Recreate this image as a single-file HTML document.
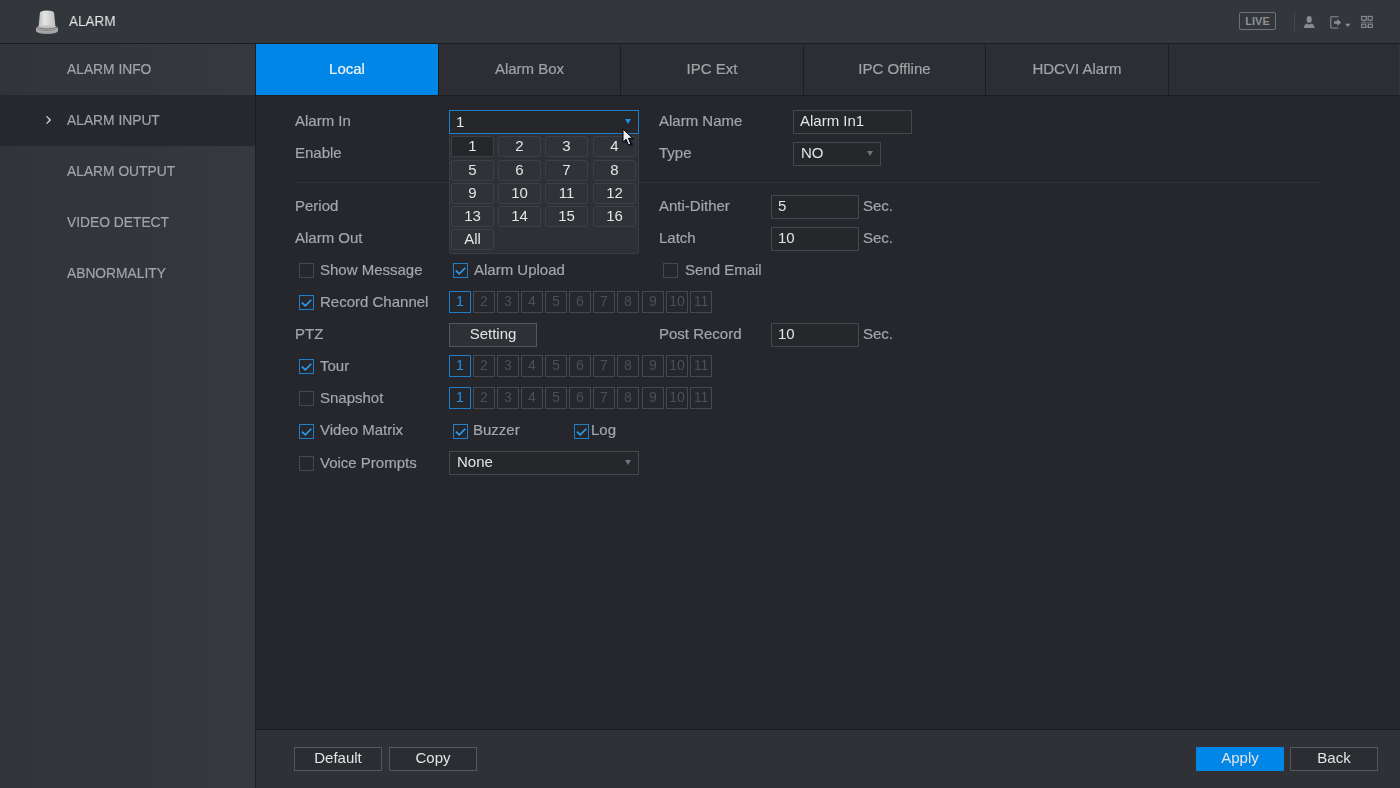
<!DOCTYPE html>
<html><head><meta charset="utf-8">
<style>
*{margin:0;padding:0;box-sizing:border-box}
html,body{width:1400px;height:788px;overflow:hidden;background:#25272c;font-family:"Liberation Sans",sans-serif;}
.a{position:absolute}
.lbl,.val,.si,.tab,.btn,.cell,.ch,.hd{will-change:transform}
.lbl,.si,.tab{-webkit-text-stroke:0.2px currentColor}
#hdr{left:0;top:0;width:1400px;height:44px;background:#33363b;border-bottom:1px solid #1d1e22}
#side{left:0;top:44px;width:255px;height:744px;background:linear-gradient(90deg,#313439 0%,#33363b 60%,#37393f 100%)}
#sideb{left:255px;top:44px;width:1px;height:744px;background:#1d1e22}
.si{left:0;width:255px;height:51px;line-height:49px;color:#a0a5a8;font-size:15px;padding-left:67px}
.si span{display:inline-block;transform:scaleX(0.92);transform-origin:0 50%}
.si.sel{background:#26282d}
#tabs{left:256px;top:44px;width:1144px;height:52px;background:#2c2e33;border-bottom:1px solid #1d1e22}
.tab{top:0;height:51px;line-height:50px;text-align:center;color:#9fa4a7;font-size:15px}
.tsep{top:0;width:1px;height:51px;background:#1d1e22}
#content{left:256px;top:96px;width:1144px;height:633px;background:#25272c}
#bot{left:256px;top:729px;width:1144px;height:59px;background:#2f3136;border-top:1px solid #1c1d21}
.lbl{color:#a2a7ab;font-size:15px;line-height:20px;white-space:nowrap}
.val{color:#e3e4e4;font-size:15px;line-height:20px;white-space:nowrap}
.box{background:#25272b;border:1px solid #45484c}
.cb{width:15px;height:15px;border:1px solid #45484c;background:transparent}
.cb.on{border-color:#1f7fc8}
.ch{width:22px;height:22px;border:1px solid #45484c;color:#4c4f54;font-size:14px;text-align:center;line-height:18px}
.ch.on{border-color:#1f7fc8;color:#2391e2}
.btn{background:#2b2d32;border:1px solid #54575b;color:#e3e4e4;font-size:15px;text-align:center;line-height:20px}
.cell{width:43px;height:21px;border:1px solid #3c3f44;border-radius:2px;background:#2f3237;color:#e3e4e4;font-size:15px;text-align:center;line-height:18px}
.tri{width:0;height:0;border-left:3.5px solid transparent;border-right:3.5px solid transparent;border-top:5px solid #6e7685}
</style></head><body>
<div id="hdr" class="a"></div>
<div class="a hd" style="left:69px;top:11px;color:#e6e6e6;font-size:15px;line-height:20px;transform:scaleX(0.9);transform-origin:0 50%">ALARM</div>

<svg class="a" style="left:33px;top:8px" width="28" height="28" viewBox="0 0 28 28">
<defs><linearGradient id="dg" x1="0" y1="0" x2="1" y2="0"><stop offset="0" stop-color="#b9b9b9"/><stop offset="0.35" stop-color="#e6e6e6"/><stop offset="1" stop-color="#bdbdbd"/></linearGradient>
<linearGradient id="bg2" x1="0" y1="0" x2="0" y2="1"><stop offset="0" stop-color="#c8c8c8"/><stop offset="1" stop-color="#9a9a9a"/></linearGradient></defs>
<path d="M6.9 5 Q7 2.6 14 2.4 Q21 2.6 21.1 5 L22.4 18.5 L5.6 18.5 Z" fill="url(#dg)"/>
<path d="M3 20.6 Q3 17.2 14 17.2 Q25 17.2 25 20.6 L25 22.6 Q25 26 14 26 Q3 26 3 22.6 Z" fill="url(#bg2)"/>
<path d="M4 19.4 Q14 22.8 24 19.4" stroke="#5f6060" stroke-width="0.8" fill="none"/>
<path d="M3.6 21 Q14 24.2 24.4 21" stroke="#7a7a7a" stroke-width="0.7" fill="none"/>
</svg>
<div class="a" style="left:1239px;top:12px;width:37px;height:18px;border:1.5px solid #6f7378;border-radius:2px;color:#8d9197;font-size:11px;font-weight:bold;text-align:center;line-height:17px">LIVE</div>
<div class="a" style="left:1293.5px;top:12px;width:1.5px;height:19px;background:#44474c"></div>
<svg class="a" style="left:1300px;top:14px" width="80" height="18" viewBox="0 0 80 18">
<ellipse cx="9.2" cy="5.4" rx="2.6" ry="3.4" fill="#878c92"/>
<path d="M3.6 14 Q4.5 10.5 6.5 9.6 Q9.2 11.2 11.9 9.6 Q13.9 10.5 14.8 14 Z" fill="#878c92"/>
<path d="M38.5 2.8 L31.5 2.8 Q30.8 2.8 30.8 3.5 L30.8 13.3 Q30.8 14 31.5 14 L38.5 14" stroke="#878c92" stroke-width="1.1" fill="none"/>
<path d="M34 7.3 L37.2 7.3 L37.2 5 L41.2 8.5 L37.2 12 L37.2 9.8 L34 9.8 Z" fill="#8a8f95"/>
<path d="M45 9.7 L50.5 9.7 L47.75 13 Z" fill="#8a8f95"/>
<g fill="none" stroke="#8a8f95" stroke-width="1.1">
<rect x="61.6" y="2.4" width="4.6" height="3.8"/><rect x="68.1" y="2.4" width="4.0" height="3.8"/>
<rect x="61.6" y="10.2" width="4.2" height="3.2"/><rect x="68.4" y="10.2" width="3.8" height="3.2"/>
</g>
<path d="M62.8 6.5 L64.2 8 L65.2 6.5 Z M69.3 6.5 L70.2 7.8 L71.1 6.5 Z" fill="#8a8f95"/>
<path d="M61 8.7 L73 8.7" stroke="#6d7177" stroke-width="0.9"/>
<path d="M66.5 13.6 L68.6 10.8" stroke="#8a8f95" stroke-width="1"/>
</svg>
<div id="side" class="a"></div>
<div id="sideb" class="a"></div>
<div class="a si" style="top:44px"><span>ALARM INFO</span></div>
<div class="a si sel" style="top:95px"><span>ALARM INPUT</span></div>
<svg class="a" style="left:44px;top:114px" width="10" height="12" viewBox="0 0 10 12"><path d="M2.6 2.4 L6.3 6 L2.6 9.6" stroke="#e2e2e2" stroke-width="1.2" fill="none"/></svg>
<div class="a si" style="top:146px"><span>ALARM OUTPUT</span></div>
<div class="a si" style="top:197px"><span>VIDEO DETECT</span></div>
<div class="a si" style="top:248px"><span>ABNORMALITY</span></div>

<div id="tabs" class="a">
  <div class="a tab" style="left:0px;width:182px;background:#0086e6;color:#f0f4f8">Local</div>
  <div class="a tsep" style="left:182px"></div>
  <div class="a tab" style="left:183px;width:181px">Alarm Box</div>
  <div class="a tsep" style="left:364px"></div>
  <div class="a tab" style="left:365px;width:182px">IPC Ext</div>
  <div class="a tsep" style="left:547px"></div>
  <div class="a tab" style="left:548px;width:181px">IPC Offline</div>
  <div class="a tsep" style="left:729px"></div>
  <div class="a tab" style="left:730px;width:182px">HDCVI Alarm</div>
  <div class="a tsep" style="left:912px"></div>
  <div class="a" style="left:1143px;top:0;width:1px;height:51px;background:#34363b"></div>
</div>

<div id="bot" class="a"></div>
<div class="a lbl" style="left:295px;top:111px">Alarm In</div>
<div class="a lbl" style="left:295px;top:143px">Enable</div>
<div class="a" style="left:296px;top:182px;width:1024px;height:1px;background:#313338"></div>
<div class="a lbl" style="left:295px;top:196px">Period</div>
<div class="a lbl" style="left:295px;top:228px">Alarm Out</div>
<div class="a cb" style="left:299px;top:263px"></div>
<div class="a lbl" style="left:320px;top:260px">Show Message</div>
<div class="a cb on" style="left:453px;top:263px"><svg width="13" height="13" viewBox="0 0 13 13" style="display:block"><path d="M1.9 6.7 L5.3 9.9 L11.3 3.7" stroke="#2a9ef0" stroke-width="1.6" fill="none"/></svg></div>
<div class="a lbl" style="left:474px;top:260px">Alarm Upload</div>
<div class="a cb" style="left:663px;top:263px"></div>
<div class="a lbl" style="left:685px;top:260px">Send Email</div>
<div class="a cb on" style="left:299px;top:295px"><svg width="13" height="13" viewBox="0 0 13 13" style="display:block"><path d="M1.9 6.7 L5.3 9.9 L11.3 3.7" stroke="#2a9ef0" stroke-width="1.6" fill="none"/></svg></div>
<div class="a lbl" style="left:320px;top:292px">Record Channel</div>
<div class="a ch on" style="left:449px;top:291px">1</div>
<div class="a ch" style="left:473px;top:291px">2</div>
<div class="a ch" style="left:497px;top:291px">3</div>
<div class="a ch" style="left:521px;top:291px">4</div>
<div class="a ch" style="left:545px;top:291px">5</div>
<div class="a ch" style="left:569px;top:291px">6</div>
<div class="a ch" style="left:593px;top:291px">7</div>
<div class="a ch" style="left:617px;top:291px">8</div>
<div class="a ch" style="left:642px;top:291px">9</div>
<div class="a ch" style="left:666px;top:291px">10</div>
<div class="a ch" style="left:690px;top:291px">11</div>
<div class="a lbl" style="left:295px;top:324px">PTZ</div>
<div class="a btn" style="left:449px;top:323px;width:88px;height:24px;background:#2e3035">Setting</div>
<div class="a lbl" style="left:659px;top:324px">Post Record</div>
<div class="a box val" style="left:771px;top:323px;width:88px;height:24px;padding-left:6px;line-height:20px">10</div>
<div class="a lbl" style="left:863px;top:324px">Sec.</div>
<div class="a cb on" style="left:299px;top:359px"><svg width="13" height="13" viewBox="0 0 13 13" style="display:block"><path d="M1.9 6.7 L5.3 9.9 L11.3 3.7" stroke="#2a9ef0" stroke-width="1.6" fill="none"/></svg></div>
<div class="a lbl" style="left:320px;top:356px">Tour</div>
<div class="a ch on" style="left:449px;top:355px">1</div>
<div class="a ch" style="left:473px;top:355px">2</div>
<div class="a ch" style="left:497px;top:355px">3</div>
<div class="a ch" style="left:521px;top:355px">4</div>
<div class="a ch" style="left:545px;top:355px">5</div>
<div class="a ch" style="left:569px;top:355px">6</div>
<div class="a ch" style="left:593px;top:355px">7</div>
<div class="a ch" style="left:617px;top:355px">8</div>
<div class="a ch" style="left:642px;top:355px">9</div>
<div class="a ch" style="left:666px;top:355px">10</div>
<div class="a ch" style="left:690px;top:355px">11</div>
<div class="a cb" style="left:299px;top:391px"></div>
<div class="a lbl" style="left:320px;top:388px">Snapshot</div>
<div class="a ch on" style="left:449px;top:387px">1</div>
<div class="a ch" style="left:473px;top:387px">2</div>
<div class="a ch" style="left:497px;top:387px">3</div>
<div class="a ch" style="left:521px;top:387px">4</div>
<div class="a ch" style="left:545px;top:387px">5</div>
<div class="a ch" style="left:569px;top:387px">6</div>
<div class="a ch" style="left:593px;top:387px">7</div>
<div class="a ch" style="left:617px;top:387px">8</div>
<div class="a ch" style="left:642px;top:387px">9</div>
<div class="a ch" style="left:666px;top:387px">10</div>
<div class="a ch" style="left:690px;top:387px">11</div>
<div class="a cb on" style="left:299px;top:424px"><svg width="13" height="13" viewBox="0 0 13 13" style="display:block"><path d="M1.9 6.7 L5.3 9.9 L11.3 3.7" stroke="#2a9ef0" stroke-width="1.6" fill="none"/></svg></div>
<div class="a lbl" style="left:320px;top:420px">Video Matrix</div>
<div class="a cb on" style="left:453px;top:424px"><svg width="13" height="13" viewBox="0 0 13 13" style="display:block"><path d="M1.9 6.7 L5.3 9.9 L11.3 3.7" stroke="#2a9ef0" stroke-width="1.6" fill="none"/></svg></div>
<div class="a lbl" style="left:473px;top:420px">Buzzer</div>
<div class="a cb on" style="left:574px;top:424px"><svg width="13" height="13" viewBox="0 0 13 13" style="display:block"><path d="M1.9 6.7 L5.3 9.9 L11.3 3.7" stroke="#2a9ef0" stroke-width="1.6" fill="none"/></svg></div>
<div class="a lbl" style="left:591px;top:420px">Log</div>
<div class="a cb" style="left:299px;top:456px"></div>
<div class="a lbl" style="left:320px;top:453px">Voice Prompts</div>
<div class="a box val" style="left:449px;top:451px;width:190px;height:24px;padding-left:7px;line-height:20px">None</div>
<div class="a tri" style="left:625px;top:460px"></div>
<div class="a lbl" style="left:659px;top:111px">Alarm Name</div>
<div class="a box val" style="left:793px;top:110px;width:119px;height:24px;padding-left:6px;line-height:20px">Alarm In1</div>
<div class="a lbl" style="left:659px;top:143px">Type</div>
<div class="a box val" style="left:793px;top:142px;width:88px;height:24px;padding-left:7px;line-height:20px">NO</div>
<div class="a tri" style="left:867px;top:151px"></div>
<div class="a lbl" style="left:659px;top:196px">Anti-Dither</div>
<div class="a box val" style="left:771px;top:195px;width:88px;height:24px;padding-left:6px;line-height:20px">5</div>
<div class="a lbl" style="left:863px;top:196px">Sec.</div>
<div class="a lbl" style="left:659px;top:228px">Latch</div>
<div class="a box val" style="left:771px;top:227px;width:88px;height:24px;padding-left:6px;line-height:20px">10</div>
<div class="a lbl" style="left:863px;top:228px">Sec.</div>
<div class="a box val" style="left:449px;top:110px;width:190px;height:24px;padding-left:6px;line-height:22px;border-color:#1f7fc8">1</div>
<div class="a tri" style="left:625px;top:119px;border-top-color:#1e8fe0"></div>
<div class="a" style="left:449px;top:134px;width:190px;height:120px;background:#2e3035;border:1px solid #3a3d42;border-top:none;border-radius:0 0 3px 3px"></div>
<div class="a cell" style="left:451px;top:136px;background:#25272b">1</div>
<div class="a cell" style="left:498px;top:136px">2</div>
<div class="a cell" style="left:545px;top:136px">3</div>
<div class="a cell" style="left:593px;top:136px">4</div>
<div class="a cell" style="left:451px;top:160px">5</div>
<div class="a cell" style="left:498px;top:160px">6</div>
<div class="a cell" style="left:545px;top:160px">7</div>
<div class="a cell" style="left:593px;top:160px">8</div>
<div class="a cell" style="left:451px;top:183px">9</div>
<div class="a cell" style="left:498px;top:183px">10</div>
<div class="a cell" style="left:545px;top:183px">11</div>
<div class="a cell" style="left:593px;top:183px">12</div>
<div class="a cell" style="left:451px;top:206px">13</div>
<div class="a cell" style="left:498px;top:206px">14</div>
<div class="a cell" style="left:545px;top:206px">15</div>
<div class="a cell" style="left:593px;top:206px">16</div>
<div class="a cell" style="left:451px;top:229px">All</div>

<div class="a btn" style="left:294px;top:747px;width:88px;height:24px">Default</div>
<div class="a btn" style="left:389px;top:747px;width:88px;height:24px">Copy</div>
<div class="a btn" style="left:1196px;top:747px;width:88px;height:24px;background:#0086e6;border-color:#0086e6">Apply</div>
<div class="a btn" style="left:1290px;top:747px;width:88px;height:24px">Back</div>
<svg class="a" style="left:621px;top:127px" width="16" height="22" viewBox="0 0 16 22">
<path d="M3.8 3.2 L3.8 16.5 L7 13.3 L9.5 19.2 L12 18.2 L9.4 12.6 L13.6 12.6 Z" fill="#0b0f3a" opacity="0.9"/>
<path d="M2 2 L2 15.2 L5.1 12.2 L7.5 18 L9.8 17 L7.4 11.3 L11.7 11.3 Z" fill="#ececec" stroke="#000" stroke-width="1"/>
</svg>
</body></html>
